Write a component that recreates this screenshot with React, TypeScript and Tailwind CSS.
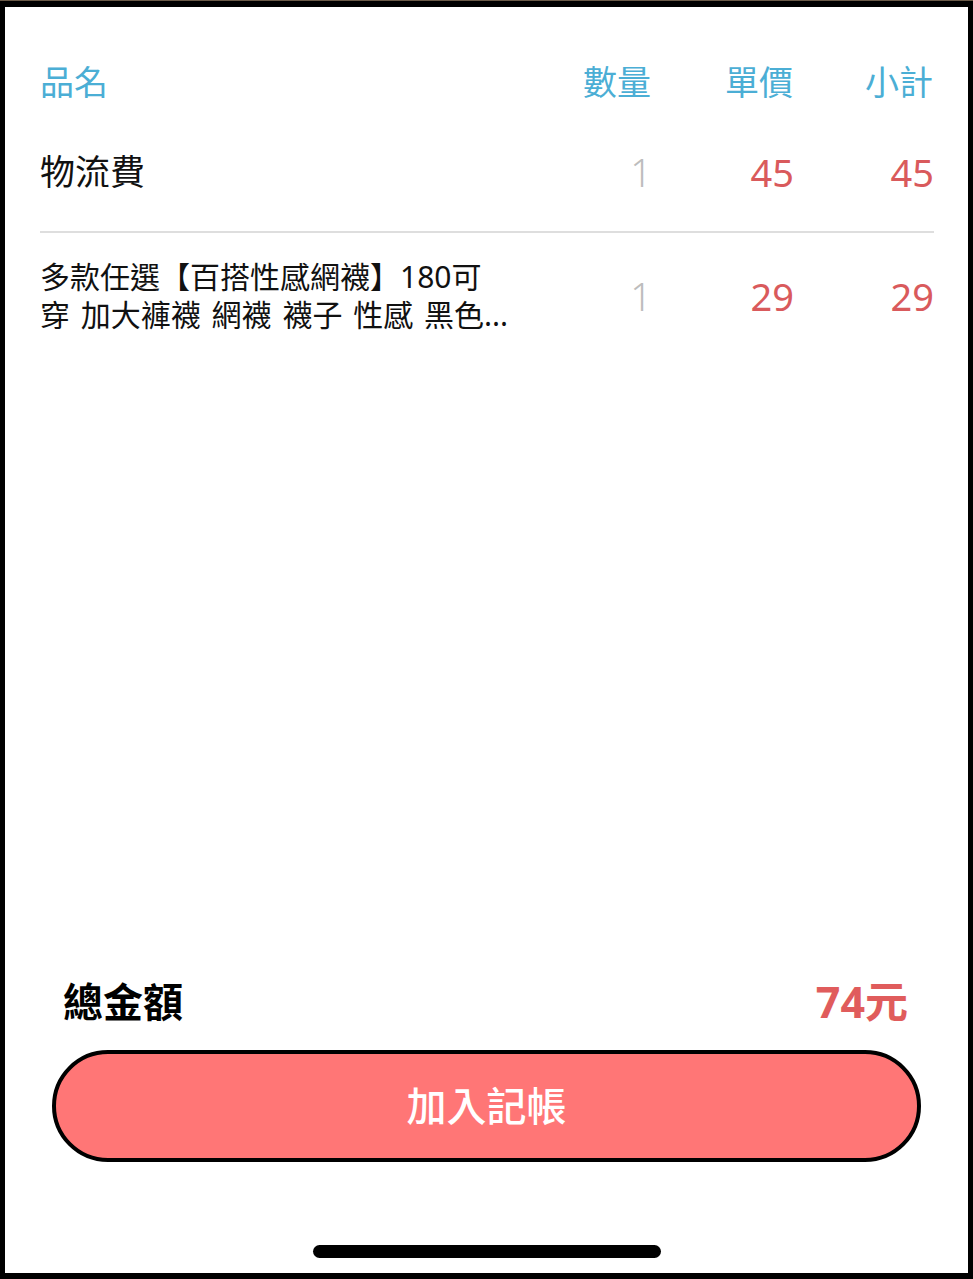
const items = [
  { lines: ['物流費'], qty: 1, price: 45, big: true },
  {
    lines: ['多款任選【百搭性感網襪】180可', '穿 加大褲襪 網襪 襪子 性感 黑色...'],
    qty: 1,
    price: 29,
    big: false,
  },
];

const font = { fontFamily: '"Noto Sans", "Noto Sans CJK TC", sans-serif' };

export default function App() {
  const total = items.reduce((sum, i) => sum + i.qty * i.price, 0);

  return (
    <div
      className="w-[973px] h-[1279px] bg-black pt-[6px] pl-[5px] pr-[5px] pb-[6px] border-t border-[#6b5a48]"
      style={font}
    >
      <div className="h-full bg-white flex flex-col">
        {/* Table header */}
        <div className="mt-[50px] h-[50px] pl-[35px] pr-[35px] flex items-center text-[34px] text-[#4baed5]">
          <div className="flex-1">品名</div>
          <div className="w-[140px] text-right">數量</div>
          <div className="w-[142px] text-right">單價</div>
          <div className="w-[140px] text-right">小計</div>
        </div>

        {/* Items */}
        <div className="mt-[6px] ml-[35px] mr-[34px]">
          {items.map((item, idx) => (
            <div
              key={idx}
              className={`flex items-center ${item.big ? 'h-[120px] border-b-2 border-[#dedede]' : 'h-[126px]'}`}
            >
              <div
                className={`flex-1 text-[#111] ${item.big ? 'text-[35px]' : 'text-[30px] leading-[38px] [word-spacing:3px]'}`}
              >
                {item.lines.map((l) => (
                  <div key={l} className="whitespace-nowrap">
                    {l}
                  </div>
                ))}
              </div>
              <div className="w-[140px] text-right text-[38px] text-[#bdbdbd] font-light">
                {item.qty}
              </div>
              <div className="w-[142px] text-right text-[38px] text-[#d95a5c]">
                {item.price}
              </div>
              <div className="w-[140px] text-right text-[38px] text-[#d95a5c]">
                {item.qty * item.price}
              </div>
            </div>
          ))}
        </div>

        <div className="flex-1" />

        {/* Total */}
        <div className="h-[60px] pl-[58px] pr-[60px] flex items-center justify-between">
          <span className="text-[40px] font-bold text-black">總金額</span>
          <span className="text-[43px] font-bold text-[#e05c5c]">{total}元</span>
        </div>

        <div className="mt-[18px] mx-[47px]">
          <button className="w-full h-[112px] rounded-full border-4 border-black bg-[#ff7676] text-white text-[40px] font-medium">
            加入記帳
          </button>
        </div>

        <div className="mt-[83px] mb-[15px] mx-auto w-[348px] h-[13px] rounded-full bg-black" />
      </div>
    </div>
  );
}
